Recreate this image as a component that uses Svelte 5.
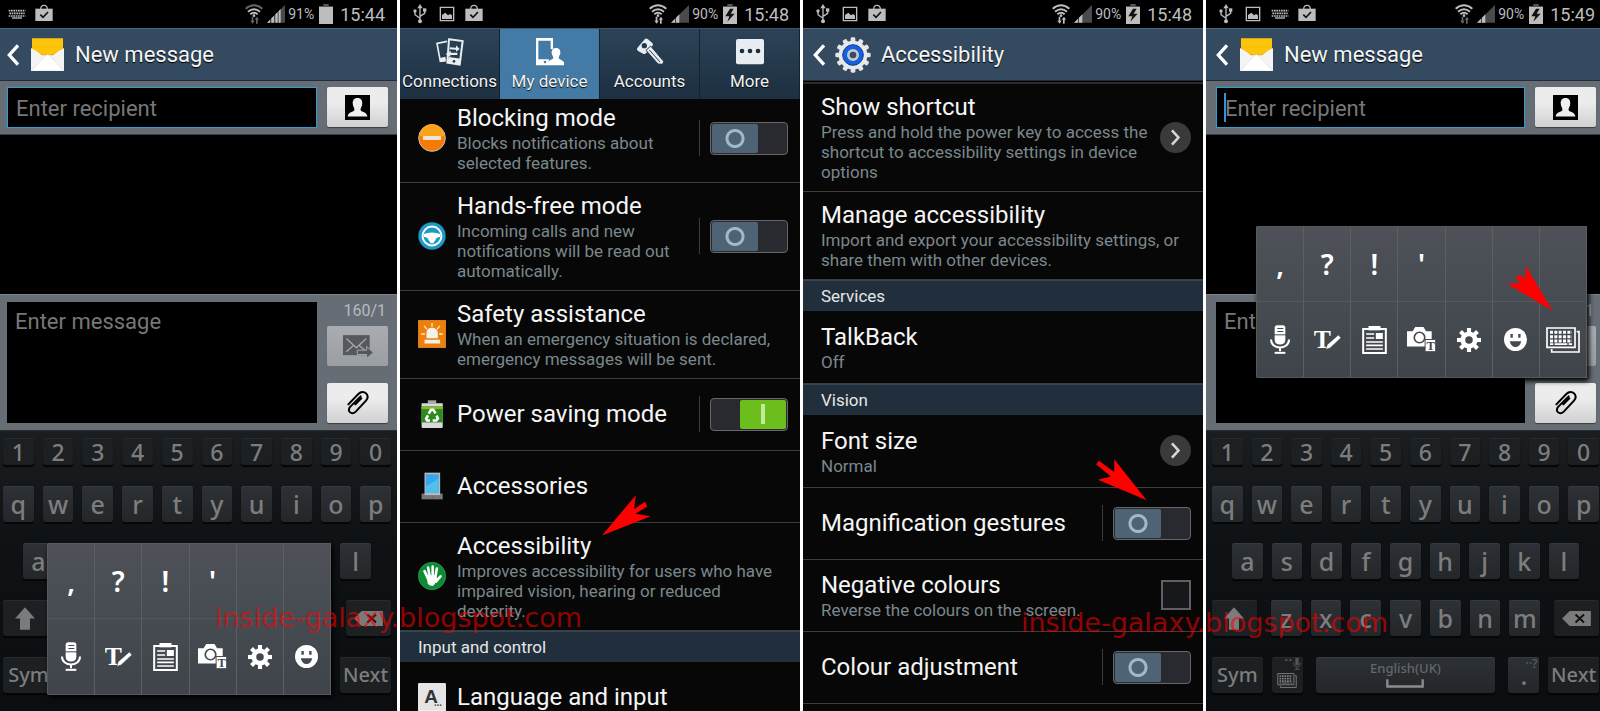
<script>
  const numbers = [...'1234567890']
  const top = [...'qwertyuiop']
  const home = [...'asdfghjkl']
  const bottom = [...'zxcvbnm']

  const symbols = [',', '?', '!', "'"]
  const tools = ['mic', 'handwriting', 'clipboard', 'camera', 'gear', 'smiley']

  const tabs = [
    { id: 'connections', label: 'Connections' },
    { id: 'device', label: 'My device' },
    { id: 'accounts', label: 'Accounts' },
    { id: 'more', label: 'More' },
  ]
  let activeTab = $state('device')

  const deviceRows = [
    { icon: 'blocking', title: 'Blocking mode', text: 'Blocks notifications about selected features.', control: 'switch' },
    { icon: 'handsfree', title: 'Hands-free mode', text: 'Incoming calls and new notifications will be read out automatically.', control: 'switch' },
    { icon: 'safety', title: 'Safety assistance', text: 'When an emergency situation is declared, emergency messages will be sent.' },
    { icon: 'power', title: 'Power saving mode', control: 'switch', on: true },
    { icon: 'dock', title: 'Accessories' },
    { icon: 'hand', title: 'Accessibility', text: 'Improves accessibility for users who have impaired vision, hearing or reduced dexterity.' },
    { section: 'Input and control' },
    { icon: 'language', title: 'Language and input' },
  ]

  const accessRows = [
    { title: 'Show shortcut', text: 'Press and hold the power key to access the shortcut to accessibility settings in device options', control: 'more' },
    { title: 'Manage accessibility', text: 'Import and export your accessibility settings, or share them with other devices.' },
    { section: 'Services' },
    { title: 'TalkBack', text: 'Off' },
    { section: 'Vision' },
    { title: 'Font size', text: 'Normal', control: 'more' },
    { title: 'Magnification gestures', control: 'switch' },
    { title: 'Negative colours', text: 'Reverse the colours on the screen.', control: 'check' },
    { title: 'Colour adjustment', control: 'switch' },
  ]

  const slug = (s) => s.toLowerCase().replace(/ /g, '-')
</script>

{#snippet statusIcon(name)}
  <svg class="sicon" viewBox="0 0 54 60" aria-hidden="true">
    {#if name === 'usb'}
      <g fill="none" stroke="#bdbdbd" stroke-width="4"><path d="M27 10v42M27 43L12 32V22M27 37l14-9V18" /></g>
      <path fill="#bdbdbd" d="M27 0l8 13H19z" /><circle cx="12" cy="21" r="5" fill="#bdbdbd" /><path fill="#bdbdbd" d="M36 13h10v10H36z" /><circle cx="27" cy="52" r="6" fill="#bdbdbd" />
    {:else if name === 'picture'}
      <path fill="none" stroke="#bdbdbd" stroke-width="4" d="M7 10h40v40H7z" /><path fill="#bdbdbd" d="M12 45V33l10-7 8 8 6-4 6 4v11z" />
    {:else if name === 'keyboard'}
      <g fill="none" stroke="#bdbdbd" stroke-width="5" stroke-dasharray="5 2"><path d="M2 20h50M4 28h46M2 36h50" /></g><path fill="#bdbdbd" d="M12 40h30v4H12z" />
    {:else if name === 'bag'}
      <path fill="none" stroke="#bdbdbd" stroke-width="4" d="M17 16C17 0 37 0 37 16" /><path fill="#bdbdbd" d="M1 14h52v37H1z" /><path fill="none" stroke="#111" stroke-width="5" d="M16 32l8 8 15-16" />
    {/if}
  </svg>
{/snippet}

{#snippet statusBar(icons, level, time, charging, active)}
  <div class="status">
    {#each icons as name}{@render statusIcon(name)}{/each}
    <svg class="sicon wifi" viewBox="0 0 54 60" aria-hidden="true">
      <g fill="none" stroke="#bdbdbd" stroke-width="6"><path d="M2 14Q27-7 52 14" stroke={charging ? '#bdbdbd' : '#666'} /><path d="M9 23Q27 8 45 23" /><path d="M16 31Q27 22 38 31" /></g>
      <circle cx="27" cy="35" r="4" fill="#bdbdbd" />
      <path fill={active ? '#bdbdbd' : '#666'} d="M20 38h5v12h4l-6 9-7-9h4zM33 59h5V47h4l-6-9-7 9h4z" />
    </svg>
    <svg class="sicon" viewBox="0 0 54 60" aria-hidden="true">
      <path fill="#4a4a4a" d="M54 3v53H0z" />
      {#if charging}<path fill="#bdbdbd" d="M0 56l12-12v12zM15 56V41l10-10v25z" />{:else}<path fill="#bdbdbd" d="M0 56l9-9v9zM13 56V43l8-8v21zM25 56V31l7-7v32zM35 56V21l6-6v41z" />{/if}
    </svg>
    <span class="level">{level}</span>
    <svg class="battery" viewBox="0 0 42 60" aria-hidden="true">
      <path fill="#555" d="M13 0h16v6h12v14H0V6h13z" /><path fill="#bdbdbd" d="M0 9h42v51H0z" />
      {#if charging}<path fill="#111" d="M21 14L7 37h12l-6 16 22-24H23l9-15z" />{/if}
    </svg>
    <span class="time">{time}</span>
  </div>
{/snippet}

{#snippet header(title, kind)}
  <header class="bar">
    <button class="back" aria-label="Back"><svg viewBox="0 0 36 66" width="12" height="22"><path fill="none" stroke="#fff" stroke-width="10" d="M33 4L7 33l26 29" /></svg></button>
    {#if kind === 'mail'}
      <svg class="appicon" viewBox="0 0 100 100" aria-hidden="true">
        <path fill="#fcc40a" d="M3 1h94v60H3z" /><path stroke="#e9a800" stroke-width="1" d="M6 27h88M6 33h88" />
        <path fill="#f4f4f4" d="M0 30l34 20h32l34-20v70H0z" /><path fill="#fcc40a" d="M3 29h94L67 50H33z" /><path fill="#e8a60a" d="M20 42l13 10h34l13-10-14 7H34z" />
        <path fill="#fff" stroke="#ddd" stroke-width="2" d="M3 97L44 53q6-5 12 0l41 44" />
      </svg>
    {:else}
      <svg class="appicon gearicon" viewBox="-54 -54 108 108" aria-hidden="true">
        {#each Array(12) as _, i}<rect x="-7" y="-53" width="14" height="24" rx="4" fill="#e6e6e6" transform="rotate({i * 30})" />{/each}
        <circle r="43" fill="#e9e9e9" /><circle r="31" fill="#1560dd" stroke="#0b3f9e" stroke-width="3" /><circle r="14" fill="#3a4c60" stroke="#c4c9cf" stroke-width="8" />
      </svg>
    {/if}
    <h1>{title}</h1>
  </header>
{/snippet}

{#snippet toolIcon(name)}
  {#if name === 'mic'}
    <svg viewBox="0 0 60 86" width="20" height="29" aria-hidden="true"><path fill="#fff" d="M22 0h16q8 0 8 8v35q0 15-16 15T14 43V8q0-8 8-8z" /><path stroke="#454a51" stroke-width="3" d="M22 10h18M22 19h18M12 29h36" /><path fill="none" stroke="#fff" stroke-width="6" d="M3 43c0 32 54 32 54 0M30 66v12" /><path fill="#fff" d="M14 80h32v6H14z" /></svg>
  {:else if name === 'handwriting'}
    <svg viewBox="0 0 82 62" width="27" height="21" aria-hidden="true"><text x="-1" y="58" font-family="Liberation Serif, serif" font-size="78" fill="#fff">T</text><path fill="#fff" stroke="#454a51" stroke-width="2" d="M36 61l4-14 34-30 8 9-33 31z" /></svg>
  {:else if name === 'clipboard'}
    <svg viewBox="0 0 74 84" width="25" height="28" aria-hidden="true"><path fill="none" stroke="#fff" stroke-width="6" d="M3 9h68v72H3z" /><path fill="#fff" d="M19 0h36v13H19z" /><path stroke="#fff" stroke-width="5" d="M12 24h24M12 36h24M12 48h50M12 58h50M12 69h50" /><path fill="#fff" d="M41 21h21v18H41z" /></svg>
  {:else if name === 'camera'}
    <svg viewBox="0 0 88 76" width="29" height="25" aria-hidden="true"><path fill="#fff" d="M0 13h17l8-13h25l8 13h17v46H0z" /><circle cx="38" cy="32" r="16" fill="#fff" stroke="#454a51" stroke-width="5" /><path fill="#fff" stroke="#454a51" stroke-width="3" d="M55 38h32v37H55z" /><text x="59" y="71" font-family="Liberation Serif, serif" font-weight="bold" font-size="38" fill="#454a51">T</text></svg>
  {:else if name === 'gear'}
    <svg viewBox="-35 -35 70 70" width="24" height="24" aria-hidden="true">{#each Array(8) as _, i}<rect x="-6" y="-35" width="12" height="16" fill="#fff" transform="rotate({i * 45})" />{/each}<circle r="18" fill="none" stroke="#fff" stroke-width="14" /></svg>
  {:else if name === 'smiley'}
    <svg viewBox="-34 -34 68 68" width="23" height="23" aria-hidden="true"><circle r="34" fill="#fff" /><path fill="#454a51" d="M-15-16h7v11h-7zM8-16h7v11H8zM-17 5h34q-4 17-17 17T-17 5z" /></svg>
  {:else}
    {@render keyboards('#fff')}
  {/if}
{/snippet}

{#snippet keyboards(color)}
  <svg class="kbicon" viewBox="0 0 102 78" aria-hidden="true"><path fill="none" stroke={color} stroke-width="5" d="M3 3h84v58H3zM92 14h7v61H17V66" /><path stroke={color} stroke-width="9" stroke-dasharray="9 4" d="M12 16h66M12 29h66M12 42h66" /><path fill={color} d="M12 49h10v5H12zM26 49h38v5H26zM68 49h10v5H68z" /></svg>
{/snippet}

{#snippet popup(items)}
  <div class="popup" class:wide={items.length > 6}>
    {#each items as _, i}<button>{symbols[i] || ''}</button>{/each}
    {#each items as name}<button aria-label={name}>{@render toolIcon(name)}</button>{/each}
  </div>
{/snippet}

{#snippet keyboard()}
  <div class="keyboard">
    <div class="keys nums">{#each numbers as k}<button class="key dark">{k}</button>{/each}</div>
    <div class="keys">{#each top as k}<button class="key">{k}</button>{/each}</div>
    <div class="keys home">{#each home as k}<button class="key">{k}</button>{/each}</div>
    <div class="keys">
      <button class="key dark shift" aria-label="Shift"><svg viewBox="0 0 60 68" width="20" height="23"><path fill="#7b7b7b" d="M30 0l30 34H45v34H15V34H0z" /></svg></button>
      {#each bottom as k}<button class="key">{k}</button>{/each}
      <button class="key dark erase" aria-label="Delete"><svg viewBox="0 0 88 46" width="29" height="15"><path fill="#7b7b7b" d="M0 23L23 0h65v46H23z" /><path stroke="#111" stroke-width="6" d="M41 11l26 24M67 11L41 35" /></svg></button>
    </div>
    <div class="keys">
      <button class="key dark word">Sym</button>
      <button class="key dark pick" aria-label="Input options">
        <svg class="hint" viewBox="0 0 48 36" width="16" height="12" aria-hidden="true"><path fill="#555" d="M0 4h7v5H0zM13 4h7v5h-7zM31 0h10v22H31z" /><path fill="none" stroke="#555" stroke-width="3" d="M26 14c0 18 20 18 20 0M36 28v6M29 34h14" /></svg>
        {@render keyboards('#7b7b7b')}
      </button>
      <button class="key space">English(UK)<svg viewBox="0 0 114 26" width="38" height="9"><path fill="none" stroke="#8c8c8c" stroke-width="7" d="M4 0v22h106V0" /></svg></button>
      <button class="key dot"><span class="hint">··?</span>.</button>
      <button class="key dark word">Next</button>
    </div>
  </div>
{/snippet}

{#snippet message(id, caret)}
  {@render header('New message', 'mail')}
  <div class="recipient">
    <div class="field">
      <input type="text" id="{id}-to" aria-label="Recipient" placeholder="Enter recipient" />
      {#if caret}<span class="caret"></span>{/if}
    </div>
    <button class="action" aria-label="Contacts"><svg viewBox="0 0 74 74" width="25" height="25"><path d="M0 0h74v74H0z" /><path fill="#eee" d="M37 9c11 0 15 8 14 18-1 8-4 10-5 16-1 8 17 5 20 19v2H8v-2c3-14 21-11 20-19-1-6-4-8-5-16C22 17 26 9 37 9z" /></svg></button>
  </div>
  <div class="thread"></div>
  <div class="compose">
    <textarea id="{id}-body" aria-label="Message" placeholder="Enter message"></textarea>
    <div class="side">
      <span class="count">160/1</span>
      <button class="action" disabled aria-label="Send"><svg viewBox="0 0 90 68" width="30" height="23"><path fill="#55585c" d="M0 0h80v60H0z" /><path fill="none" stroke="#a3a6aa" stroke-width="4" d="M10 10l30 28 30-28M10 50l22-20M70 50L48 30" /><path fill="#55585c" stroke="#a3a6aa" stroke-width="3" d="M43 45h28V34l20 18-20 18V58H43z" /></svg></button>
      <button class="action" aria-label="Attach"><svg viewBox="0 0 66 72" width="22" height="24"><path fill="none" stroke="#000" stroke-width="6" stroke-linecap="round" d="M4 40L34 9c8-8 18-7 24-1 6 7 5 14-1 21L27 61c-6 6-13 7-18 3-5-5-4-11 1-17l31-31M25 40L43 22" /></svg></button>
    </div>
  </div>
  {@render keyboard()}
{/snippet}

{#snippet tabIcon(name)}
  <svg viewBox="0 0 84 84" width="28" height="28" aria-hidden="true">
    {#if name === 'connections'}
      <path fill="none" stroke="#e8edf1" stroke-width="5" d="M33 10L3 16l10 54 16-2" /><path fill="#e8edf1" d="M12 60l16-4 2 13-16 3z" />
      <path fill="none" stroke="#e8edf1" stroke-width="6" d="M39 4l41 5-9 71-37-6z" /><path fill="#e8edf1" d="M38 57l38 5-4 18-38-5z" /><circle cx="54" cy="70" r="4" fill="#24394c" />
      <path fill="#e8edf1" d="M42 28l18 1v-7l11 11-11 8v-6l-20-1zM64 44H44v-6L29 48l14 9v-6h21z" />
    {:else if name === 'device'}
      <path fill="#fff" d="M0 0h51v33h-7V8H7v56h32l-3 18H0z" /><circle cx="27" cy="72" r="4" fill="#437aa6" />
      <path fill="#fff" d="M60 30c10 0 14 7 13 16-1 6-4 8-5 13 0 6 17 6 18 20v3H34v-3c1-14 18-14 18-20-1-5-4-7-5-13-1-9 3-16 13-16z" />
    {:else if name === 'accounts'}
      <path fill="#e8edf1" d="M4 30L26 4q4-4 9-1l14 12q4 5 0 9L30 46q-4 4-9 1L5 38q-4-4-1-8z" /><circle cx="25" cy="23" r="8" fill="#24394c" />
      <path fill="#e8edf1" stroke="#24394c" stroke-width="3" d="M30 37l14-13 39 46-3 9-14-1z" /><path stroke="#24394c" stroke-width="3" d="M40 36l32 36" />
    {:else}
      <rect y="3" width="84" height="76" rx="6" fill="#e8edf1" /><g fill="#1c2c3b"><circle cx="18" cy="39" r="7" /><circle cx="42" cy="39" r="7" /><circle cx="66" cy="39" r="7" /></g>
    {/if}
  </svg>
{/snippet}

{#snippet rowIcon(name)}
  <svg class="rowicon" viewBox="0 0 86 86" aria-hidden="true">
    {#if name === 'blocking'}
      <circle cx="43" cy="43" r="41" fill="#f57c00" stroke="#c9c0b8" stroke-width="3" /><path fill="#fba31a" d="M5 38a38 38 0 0 1 76 0z" /><rect x="15" y="37" width="56" height="12" rx="2" fill="#ece3da" />
    {:else if name === 'handsfree'}
      <circle cx="43" cy="43" r="42" fill="#1c9ac6" /><circle cx="43" cy="43" r="29" fill="none" stroke="#fff" stroke-width="6" /><path fill="#fff" d="M17 37q26-10 52 0l-2 9q-10 0-14 10l-6 9h-8l-6-9q-4-10-14-10z" />
    {:else if name === 'safety'}
      <path fill="#f07f09" stroke="#ffa13d" stroke-width="2" d="M1 1h84v84H1z" /><path fill="#f4f0ea" d="M20 61h48v11H20zM26 56V41q0-17 17-17t18 17v15z" /><path stroke="#f4f0ea" stroke-width="4" d="M43 9v12M19 18l8 10M67 18l-8 10M10 43h11M65 43h11" />
    {:else if name === 'power'}
      <path fill="#aaa" d="M30 1h26v9H30z" /><path fill="#d8d8d8" d="M11 10h65v72q0 4-4 4H15q-4 0-4-4z" /><path fill="#2f8a1c" d="M11 19h65v50H11z" /><path fill="#83b934" d="M11 19h65v9H11z" />
      <g fill="none" stroke="#fff" stroke-width="8"><path d="M33 42l7-12h7l7 11M57 48l4 9-5 6H45M37 63h-9l-3-6 6-10" /></g>
    {:else if name === 'dock'}
      <path fill="#777" d="M11 66h65v18H11z" /><path fill="#b3bac2" d="M20 2h48v69H20z" /><path fill="#39a5ec" d="M24 7h40v57H24z" /><path fill="#50c0ea" d="M24 44L64 20v44H24z" /><path fill="#d22" d="M41 77h6v3h-6z" />
    {:else if name === 'hand'}
      <circle cx="43" cy="43" r="42" fill="#0c8c35" stroke="#3aa65a" stroke-width="2" />
      <path fill="none" stroke="#fff" stroke-width="8" stroke-linecap="round" d="M30 50L20 28M36 46L31 17M45 46V14M53 48l5-28M55 60l14-16" /><path fill="#fff" d="M26 42l30-2 3 16-11 16q-12 3-18-5z" />
    {:else}
      <path fill="#e4e4e4" stroke="#fff" stroke-width="3" d="M2 2h82v84H2z" /><text x="19" y="60" font-family="Liberation Sans, sans-serif" font-weight="bold" font-size="58" fill="#333">A</text><path fill="#333" d="M51 66h5v4h-5zM59 66h5v4h-5zM67 66h5v4h-5z" />
    {/if}
  </svg>
{/snippet}

{#snippet rows(list)}
  {#each list as row}
    {#if row.section}
      <h2>{row.section}</h2>
    {:else}
      <div class="row">
        {#if row.icon}{@render rowIcon(row.icon)}{/if}
        <div class="copy">
          <label class="title" for={slug(row.title)}>{row.title}</label>
          {#if row.text}<p>{row.text}</p>{/if}
        </div>
        {#if row.control === 'switch'}
          <div class="toggle"><input type="checkbox" role="switch" id={slug(row.title)} checked={row.on} /></div>
        {:else if row.control === 'check'}
          <input class="check" type="checkbox" id={slug(row.title)} />
        {:else if row.control === 'more'}
          <button class="go" id={slug(row.title)} aria-label={row.title}><svg viewBox="0 0 28 50" width="9" height="17"><path fill="none" stroke="#d6d6d6" stroke-width="8" d="M3 3l20 22L3 47" /></svg></button>
        {/if}
      </div>
    {/if}
  {/each}
{/snippet}

<main>
  <section class="phone first">
    {@render statusBar(['keyboard', 'bag'], '91%', '15:44', false, false)}
    {@render message('a', false)}
    <div class="over low">{@render popup(tools)}</div>
  </section>

  <section class="phone">
    {@render statusBar(['usb', 'picture', 'bag'], '90%', '15:48', true, true)}
    <nav>
      {#each tabs as tab}
        <button class:active={activeTab === tab.id} onclick={() => (activeTab = tab.id)}>{@render tabIcon(tab.id)}{tab.label}</button>
      {/each}
    </nav>
    <div class="list scrolled">{@render rows(deviceRows)}</div>
    <svg class="arrow to-access" viewBox="607 616 148 123" aria-hidden="true"><path d="M607 738L709 616l-5 42 33-22 7 14-36 22 46 8z" /></svg>
  </section>

  <section class="phone">
    {@render statusBar(['usb', 'picture', 'bag'], '90%', '15:48', true, true)}
    {@render header('Accessibility', 'gear')}
    <div class="list ruled">{@render rows(accessRows)}</div>
    <svg class="arrow to-switch" viewBox="887 508 154 125" aria-hidden="true"><path d="M1040 632l-98-124v38l-46-34-9 11 45 37-39 10z" /></svg>
  </section>

  <section class="phone last">
    {@render statusBar(['usb', 'picture', 'keyboard', 'bag'], '90%', '15:49', true, false)}
    {@render message('b', true)}
    <div class="over high">{@render popup([...tools, 'keyboards'])}</div>
    <svg class="arrow to-keys" viewBox="921 137 137 136" aria-hidden="true"><path d="M1057 272l-80-135-3 40-17-15-10 11 15 15-41 3z" /></svg>
  </section>

  <span class="mark one">inside-galaxy.blogspot.com</span>
  <span class="mark two">inside-galaxy.blogspot.com</span>
</main>

<style>
  :global(body) { margin: 0; background: #fff; }
  main {
    position: relative; height: 100vh; overflow: hidden;
    display: grid; grid-template-columns: 397fr 400fr 400fr 394fr; gap: 3px;
    font-family: Roboto, sans-serif;
  }
  main :global(*) { box-sizing: border-box; }
  button, input, textarea { font: inherit; margin: 0; padding: 0; border: 0; border-radius: 0; }
  button { display: flex; align-items: center; justify-content: center; }
  h1, h2, p { margin: 0; font-weight: 400; }
  svg { flex: none; }

  .phone {
    --left: 10px; --right: 12px;
    position: relative; min-width: 0; height: 100vh; overflow: hidden;
    display: flex; flex-direction: column; background: #000; color: #f5f5f5;
  }
  .first { --left: 7px; --right: 9px; }
  .last { --right: 4px; }

  .status { flex: none; height: 28px; display: flex; align-items: center; gap: 9px; padding: 0 12px 0 11px; color: #bdbdbd; }
  .first .status { padding-left: 8px; }
  .last .status { padding-right: 6px; }
  .sicon { width: 18px; height: 20px; }
  .wifi { margin-left: auto; }
  .wifi + .sicon { margin-left: -5px; }
  .level { font-size: 14px; margin-left: -6px; }
  .battery { width: 14px; height: 20px; margin-left: -4px; }
  .time { font-size: 18px; margin-left: -2px; }
  .phone:not(.first) .time { margin-right: -1px; }

  .bar {
    flex: none; height: 53px; display: flex; align-items: center; padding: 0 var(--left);
    background: #344a61; border-top: 1px solid #4c6a7c; border-bottom: 1px solid #1d2b3a;
  }
  .back { background: none; }
  .appicon { width: 33px; height: 33px; margin: 0 11px 0 12px; }
  .gearicon { width: 36px; height: 36px; margin: 0 10px; }
  h1 { font-size: 22px; line-height: 28px; text-shadow: 0 1px 1px #000; }

  .recipient {
    flex: none; display: flex; gap: 10px; padding: 6px var(--right) 6px var(--left);
    background: #666d75; border-bottom: 1px solid #3b3f44;
  }
  .field { position: relative; flex: 1; min-width: 0; }
  .field input {
    display: block; width: 100%; height: 41px; padding: 2px 8px 0; background: #000;
    border: 1px solid #2f9fd0; color: #eee; font-size: 22px; outline: none;
  }
  .caret { position: absolute; left: 8px; top: 6px; width: 2px; height: 29px; background: #3a8fd6; }
  ::placeholder { color: #777; opacity: 1; }
  .action {
    flex: none; width: 61px; height: 40px; border-radius: 2px;
    background: linear-gradient(#ececec 40%, #d0d0d0); box-shadow: 0 1px 1px #3a3d42;
  }
  .action:disabled { background: linear-gradient(#a9acb1, #9a9da2); box-shadow: none; }
  .thread { flex: 1; }
  .compose {
    flex: none; display: flex; gap: 10px; padding: 7px var(--right) 7px var(--left);
    background: #666d75; border-top: 1px solid #7c838b;
  }
  textarea {
    flex: 1; min-width: 0; padding: 7px 8px; background: #000; color: #eee;
    font-size: 22px; line-height: 26px; resize: none; outline: none;
  }
  .side { display: flex; flex-direction: column; }
  .count { height: 24px; padding-right: 2px; font-size: 16px; line-height: 18px; text-align: right; color: #b6babe; }
  .side .action + .action { margin-top: 17px; }

  .keyboard {
    flex: none; display: flex; flex-direction: column; gap: 21px; padding: 7px 6px 18px 3px;
    background: linear-gradient(#1b1e20, #0f1215 40%, #0b0e11); border-top: 1px solid #2b2e31;
    font-family: "Noto Sans", sans-serif;
  }
  .last .keyboard { padding-left: 6px; padding-right: 1px; }
  .keys { display: flex; gap: 9px; height: 36px; }
  .nums { height: 27px; }
  .home { padding: 0 20px; }
  .key {
    position: relative; flex: 31 1 0; min-width: 0; border-radius: 3px; color: #7d7d7d; font-size: 25px; font-weight: 500; line-height: 26px;
    background: linear-gradient(#2d3135, #23272a); box-shadow: 0 2px 1px #050607, inset 0 1px #363b3f;
  }
  .dark { background: #1c2023; box-shadow: 0 2px 1px #050607, inset 0 1px #272b2e; }
  .nums .key { font-size: 23px; }
  .shift { flex-grow: 45; margin-right: 5px; }
  .erase { flex-grow: 45; margin-left: 5px; }
  .word { flex-grow: 51; font-size: 20px; }
  .pick { align-items: flex-end; padding-bottom: 5px; }
  .kbicon { width: 34px; height: 26px; }
  .pick .kbicon { width: 20px; height: 15px; }
  .space { flex-grow: 181; margin: 0 4px; padding-bottom: 3px; flex-direction: column; gap: 2px; font-size: 13px; line-height: 18px; color: #63676a; }
  .hint { position: absolute; right: 2px; top: 1px; font-size: 12px; line-height: 12px; color: #5c5c5c; }

  .over { position: absolute; z-index: 1; }
  .low { left: 47px; bottom: 16px; }
  .high { right: 13px; top: 226px; }
  .popup {
    display: grid; grid-template-columns: repeat(6, 1fr); width: 284px; border-radius: 2px; padding-left: 1px;
    background: linear-gradient(#4e5258, #3f444b); box-shadow: 0 0 0 1px #565a5f inset, 2px 3px 5px #000;
  }
  .wide { grid-template-columns: repeat(7, 1fr); width: 331px; }
  .popup button {
    height: 76px; background: none; color: #fff; border-right: 1px solid #5b5e62; border-bottom: 1px solid #54575b;
    font: 600 28px/38px "Noto Sans", sans-serif;
  }

  nav { flex: none; display: grid; grid-template-columns: repeat(4, 1fr); height: 71px; border-top: 1px solid #3f5567; }
  nav button {
    flex-direction: column; gap: 3px; padding-top: 2px; background: linear-gradient(#2c4357, #1d2f41);
    color: #f2f2f2; font-size: 17px; line-height: 24px; border-right: 1px solid #16222e; text-shadow: 0 1px 1px #000;
  }
  nav .active { background: #437aa6; }

  .list { flex: 1; min-height: 0; overflow: hidden; background: #070707; }
  .scrolled .row:first-child { margin-top: -4px; }
  .ruled { border-top: 2px solid #2b2b2b; margin-top: 1px; }
  .row {
    display: flex; align-items: center; min-height: 72px; padding: 8px 12px 9px 18px;
    border-bottom: 1px solid #3d3d3d;
  }
  .row:has(.go) { min-height: 73px; }
  .row:has(+ h2) { min-height: 73px; }
  .rowicon { width: 28px; height: 28px; margin-right: 11px; }
  .copy { flex: 1; min-width: 0; }
  .title { display: block; font-size: 24px; line-height: 30px; }
  p { font-size: 17px; line-height: 20px; color: #7b878d; }
  h2 {
    height: 31px; padding: 0 18px; background: #212f3d; border-top: 1px solid #354452;
    font-size: 17px; line-height: 30px; color: #e6e6e6;
  }
  .toggle { display: flex; align-items: center; height: 36px; margin-left: 10px; padding-left: 10px; border-left: 1px solid #3a3a3a; }
  .toggle input {
    appearance: none; display: flex; width: 78px; height: 33px; padding: 1px;
    border: 1px solid #67676a; border-radius: 4px; background: #292930;
  }
  .toggle input::before {
    content: ''; width: 46px; border-radius: 2px;
    background: radial-gradient(circle at center, transparent 6px, #a2b8cd 7px 9px, transparent 10px) #4e6475;
  }
  .toggle input:checked { justify-content: flex-end; }
  .toggle input:checked::before { background: linear-gradient(#c1eb98, #c1eb98) center / 4px 20px no-repeat #6cbe1d; }
  .go { flex: none; width: 31px; height: 31px; margin-left: 12px; border-radius: 50%; background: #3a3a3b; }
  .check { appearance: none; width: 30px; height: 30px; border: 2px solid #606063; background: #16171b; }

  .arrow { position: absolute; fill: #f00; z-index: 2; }
  .to-access { left: 202px; top: 495px; width: 49px; height: 41px; }
  .to-switch { right: 56px; top: 459px; width: 51px; height: 42px; }
  .to-keys { right: 47px; top: 266px; width: 46px; height: 45px; }
  .mark { position: absolute; z-index: 3; font: 27px/30px "DejaVu Sans", sans-serif; color: #f00; opacity: 0.55; white-space: nowrap; }
  .one { left: 215px; top: 603px; }
  .two { left: 1021px; top: 608px; }
</style>
